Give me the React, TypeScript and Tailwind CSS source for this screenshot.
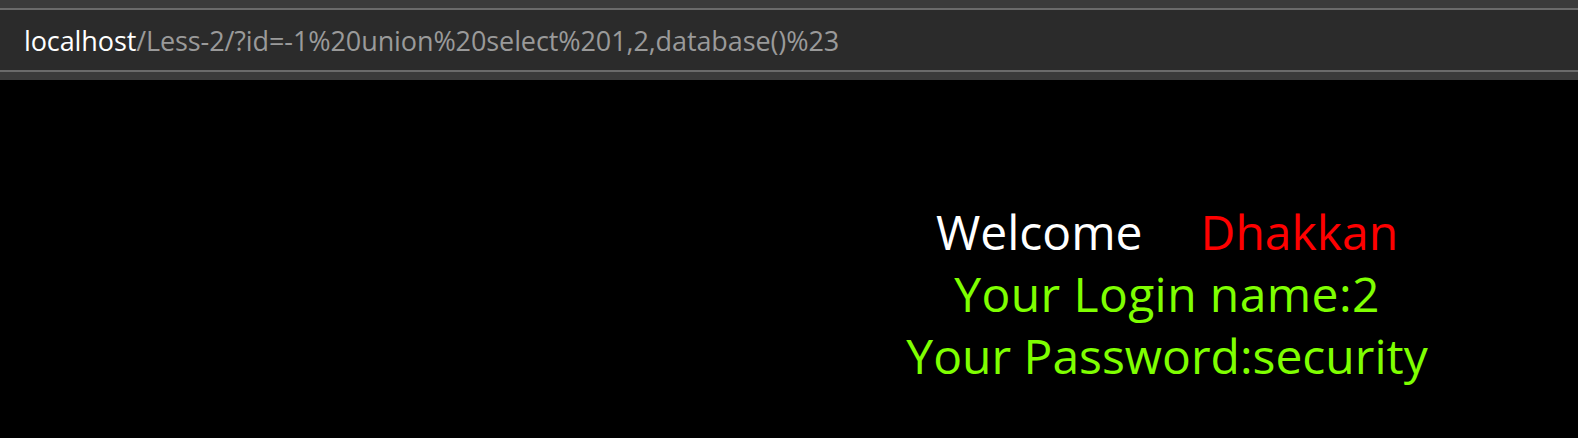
export default function App() {
  return (
    <div className="w-[1578px] h-[438px] bg-black overflow-hidden" style={{ fontFamily: '"Open Sans", "Noto Sans", sans-serif' }}>
      <div className="h-[8px] bg-[#3b3b3b]" />
      <div className="h-[2px] bg-[#6b6b6b]" />
      <div className="h-[60px] bg-[#2b2b2b] flex items-center pl-[24px]">
        <span className="text-[27px] tracking-[-0.1px] leading-none">
          <span className="text-white">localhost</span>
          <span className="text-[#9a9a9a]">/Less-2/?id=-1%20union%20select%201,2,database()%23</span>
        </span>
      </div>
      <div className="h-[2px] bg-[#6b6b6b]" />
      <div className="h-[8px] bg-[#3b3b3b]" />
      <div className="pl-[756px] pt-[121px] text-center text-[48px] leading-[62px]">
        <div>
          <span className="text-white">Welcome</span>
          <span className="inline-block w-[58px]" />
          <span className="text-[#ff0000]">Dhakkan</span>
        </div>
        <div className="text-[#7fff00] tracking-[0.4px]">Your Login name:2</div>
        <div className="text-[#7fff00]">Your Password:security</div>
      </div>
    </div>
  );
}
